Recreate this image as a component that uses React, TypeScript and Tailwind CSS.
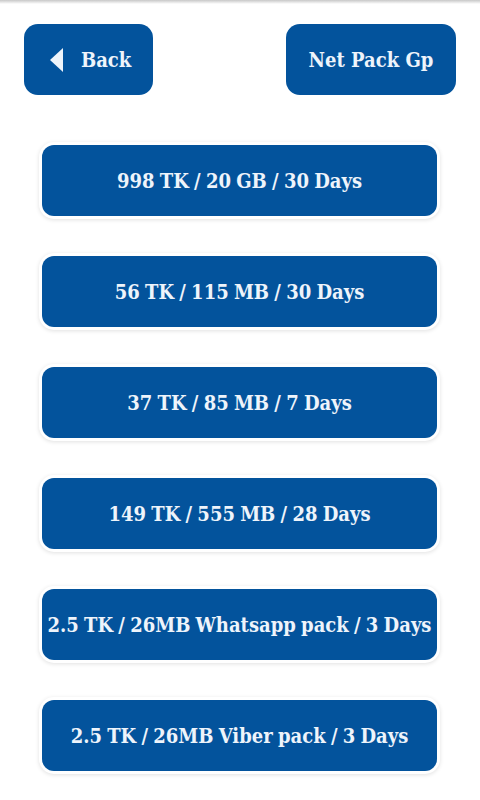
const packs = [
  "998 TK / 20 GB / 30 Days",
  "56 TK / 115 MB / 30 Days",
  "37 TK / 85 MB / 7 Days",
  "149 TK / 555 MB / 28 Days",
  "2.5 TK / 26MB Whatsapp pack / 3 Days",
  "2.5 TK / 26MB Viber pack / 3 Days",
];

const font = {
  fontFamily: '"DejaVu Serif Condensed", "DejaVu Serif", "Liberation Serif", serif',
  fontStretch: "condensed",
};

export default function App() {
  return (
    <div className="relative min-h-[800px] w-[480px] bg-white" style={font}>
      <div className="absolute left-0 right-0 top-0 h-[4px] bg-gradient-to-b from-[#c8c8c8] to-white" />
      <div className="flex justify-between px-[24px] pt-[24px]">
        <button className="flex h-[71px] w-[129px] items-center gap-[17px] rounded-[14px] bg-[#03539c] pl-[26px] text-[20px] font-bold text-[#eef4fb]">
          <svg width="14" height="24" viewBox="0 0 14 24">
            <polygon points="13,0 13,24 0,12" fill="#eef4fb" />
          </svg>
          Back
        </button>
        <button className="flex h-[71px] w-[170px] items-center justify-center rounded-[14px] bg-[#03539c] text-[20px] font-bold text-[#eef4fb]">
          Net Pack Gp
        </button>
      </div>
      <div className="mt-[47px] flex flex-col gap-[34px] pl-[39px] pr-[40px]">
        {packs.map((p, i) => (
          <div
            key={i}
            className="rounded-[15px] bg-white p-[3px] shadow-[0_1px_4px_rgba(0,0,0,0.12)]"
          >
            <button className="flex h-[71px] w-full items-center justify-center whitespace-nowrap rounded-[12px] bg-[#03539c] text-[20px] font-bold text-[#eef4fb] [word-spacing:-1px]">
              {p}
            </button>
          </div>
        ))}
      </div>
    </div>
  );
}
